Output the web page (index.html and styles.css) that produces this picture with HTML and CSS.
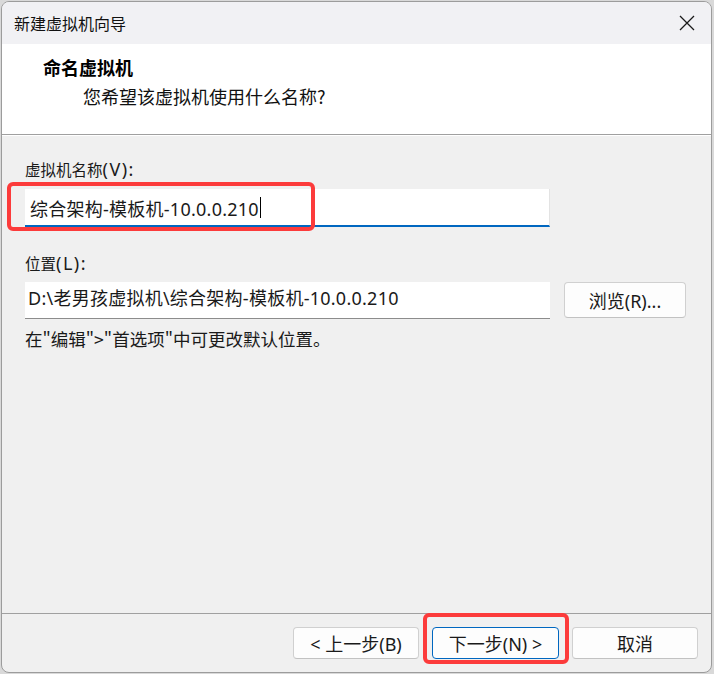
FILE: index.html
```html
<!DOCTYPE html>
<html lang="zh-CN">
<head>
<meta charset="utf-8">
<title>新建虚拟机向导</title>
<link rel="stylesheet" href="styles.css">
</head>
<body>
<div class="window">
  <div class="titlebar">
    <span class="title">新建虚拟机向导</span>
    <svg class="close" width="16" height="16" viewBox="0 0 16 16"><path d="M1 1 L15 15 M15 1 L1 15" stroke="#1a1a1a" stroke-width="1.3" fill="none"/></svg>
  </div>
  <div class="header">
    <div class="heading">命名虚拟机</div>
    <div class="subtitle">您希望该虚拟机使用什么名称?</div>
  </div>
  <div class="content">
    <div class="label">虚拟机名称<span class="lat">(V):</span></div>
    <div class="field-wrap">
      <div class="input active"><span class="value">综合架构-模板机-10.0.0.210</span><span class="caret"></span></div>
      <div class="highlight hl-name"></div>
    </div>
    <div class="label label2">位置<span class="lat">(L):</span></div>
    <div class="row">
      <div class="input loc"><span class="value">D:\老男孩虚拟机\综合架构-模板机-10.0.0.210</span></div>
      <div class="btn browse">浏览(R)...</div>
    </div>
    <div class="hint">在"编辑"&gt;"首选项"中可更改默认位置。</div>
  </div>
  <div class="footer">
    <div class="btn">&lt; 上一步(B)</div>
    <div class="next-wrap">
      <div class="btn default">下一步(N) &gt;</div>
      <div class="highlight hl-next"></div>
    </div>
    <div class="btn">取消</div>
  </div>
</div>
</body>
</html>
```

FILE: styles.css
```css
* { box-sizing: border-box; }
html, body { margin: 0; padding: 0; }
body {
  width: 714px;
  height: 674px;
  background: #d9d9d9;
  font-family: "Noto Sans", "Noto Sans CJK SC", sans-serif;
  color: #1a1a1a;
  overflow: hidden;
}
.window {
  margin: 1px 0 0 1px;
  width: 711px;
  height: 672px;
  border: 1px solid #9c9c9c;
  border-radius: 8px;
  overflow: hidden;
  background: #f0f0f0;
  display: flex;
  flex-direction: column;
}
.titlebar {
  height: 42px;
  flex: none;
  background: #f1f1f4;
  display: flex;
  align-items: center;
  justify-content: space-between;
  padding: 0 16px 0 12px;
}
.title {
  font-family: "Noto Sans CJK SC", sans-serif;
  font-size: 16px;
  color: #111;
}
.close { display: block; }
.header {
  height: 91px;
  flex: none;
  background: #ffffff;
  border-bottom: 1px solid #a0a0a0;
  padding: 10px 0 0 41px;
}
.heading {
  font-family: "Noto Sans CJK SC", sans-serif;
  font-weight: 700;
  font-size: 18px;
  line-height: 26px;
  color: #000;
}
.subtitle {
  font-family: "Noto Sans CJK SC", sans-serif;
  font-size: 18px;
  line-height: 26px;
  margin: 3px 0 0 40px;
  color: #111;
}
.content {
  flex: 1;
  border-top: 1px solid #ffffff;
  padding: 22px 0 0 23px;
}
.label {
  font-family: "Noto Sans CJK SC", sans-serif;
  font-size: 15.5px;
  line-height: 22px;
  height: 22px;
  color: #1a1a1a;
}
.lat {
  font-family: "Noto Sans", sans-serif;
  font-size: 18px;
  letter-spacing: 1.5px;
}
.label2 { margin-top: 25px; }
.field-wrap {
  position: relative;
  margin-top: 9px;
  width: 525px;
}
.input {
  width: 525px;
  height: 38px;
  background: #ffffff;
  display: flex;
  align-items: center;
  padding-left: 5px;
}
.input.active {
  border-bottom: 2px solid #0067c0;
  border-right: 1px solid #e3e3e3;
  padding-top: 1px;
}
.value {
  font-family: "Noto Sans", "Noto Sans CJK SC", sans-serif;
  font-size: 18px;
  letter-spacing: 0.25px;
  color: #1a1a1a;
  white-space: nowrap;
}
.caret {
  display: inline-block;
  width: 1px;
  height: 21px;
  background: #000;
  margin-left: 1px;
}
.row {
  display: flex;
  align-items: flex-start;
  margin-top: 8px;
}
.input.loc {
  height: 37px;
  border-bottom: 1px solid #8c8c8c;
  padding-left: 3px;
  padding-bottom: 7px;
}
.btn {
  width: 126px;
  height: 32px;
  background: #fdfdfd;
  border: 1px solid #d0d0d0;
  border-bottom-color: #c2c2c2;
  border-radius: 4px;
  display: flex;
  align-items: center;
  justify-content: center;
  font-family: "Noto Sans", "Noto Sans CJK SC", sans-serif;
  font-size: 18px;
  color: #1a1a1a;
}
.btn.browse {
  margin-left: 14px;
  width: 122px;
  height: 36px;
}
.hint {
  margin-top: 9px;
  font-family: "Noto Sans CJK SC", sans-serif;
  font-size: 17.5px;
  line-height: 22px;
  color: #1a1a1a;
}
.footer {
  flex: none;
  height: 59px;
  border-top: 1px solid #a0a0a0;
  display: flex;
  align-items: flex-start;
  justify-content: flex-end;
  padding: 13px 13px 0 0;
  gap: 13px;
}
.next-wrap { position: relative; }
.btn.default {
  width: 127px;
  border: 1px solid #0067c0;
}
.highlight {
  position: absolute;
  border: 4px solid #fc3b3b;
  border-radius: 6px;
  pointer-events: none;
}
.hl-name {
  left: -18px;
  top: -7px;
  width: 308px;
  height: 49px;
}
.hl-next {
  left: -9px;
  top: -14px;
  width: 146px;
  height: 51px;
}
```
